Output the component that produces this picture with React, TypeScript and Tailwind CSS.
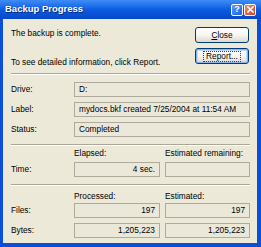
import React from 'react';

function Field({ value, right, className = '' }: { value?: string; right?: boolean; className?: string }) {
  return (
    <div
      className={`h-[15px] border border-[#aeab9e] bg-[#ebe8d9] px-[4px] leading-[13px] ${right ? 'text-right' : ''} ${className}`}
    >
      {value}
    </div>
  );
}

function Separator({ className = '' }: { className?: string }) {
  return (
    <div className={`border-t border-[#aca899] border-b border-b-white ${className}`} />
  );
}

function XpButton({ children, focused }: { children: React.ReactNode; focused?: boolean }) {
  return (
    <div
      className={`h-[16px] w-[54px] rounded-[3px] border border-[#003c74] bg-gradient-to-b from-white via-[#f7f6f1] to-[#dcd9cd] flex items-center justify-center ${
        focused ? 'shadow-[inset_0_0_0_1px_#8eb4ee,inset_0_0_0_2px_#c4d9f7]' : ''
      }`}
    >
      <span className={focused ? 'outline outline-1 outline-dotted outline-[#444] px-[2px] leading-[9px]' : ''}>
        {children}
      </span>
    </div>
  );
}

export default function App() {
  return (
    <div className="w-[261px] h-[247px] bg-[#0a4fd6] flex flex-col font-['Liberation_Sans',Arial,sans-serif] text-[8.3px] text-black overflow-hidden">
      {/* Title bar */}
      <div className="h-[19px] shrink-0 bg-gradient-to-b from-[#3f8cf6] via-[#0b5ce2] to-[#0847c8] flex items-center pl-[5px] pr-[5px]">
        <div className="flex-1 text-white font-bold text-[9.5px] [text-shadow:1px_1px_0_#0a2a80]">
          Backup Progress
        </div>
        <div className="flex items-center gap-[1px]">
          <div className="h-[12px] w-[12px] rounded-[2px] border border-white bg-gradient-to-br from-[#5c9cff] to-[#1a5fe0] flex items-center justify-center text-white font-bold text-[9px] leading-none">
            ?
          </div>
          <div className="h-[12px] w-[12px] rounded-[2px] border border-white bg-gradient-to-br from-[#f08c6a] to-[#d2401c] flex items-center justify-center">
            <svg width="7" height="7" viewBox="0 0 7 7">
              <path d="M1 1 L6 6 M6 1 L1 6" stroke="white" strokeWidth="1.6" strokeLinecap="square" />
            </svg>
          </div>
        </div>
      </div>

      {/* Body */}
      <div className="flex-1 ml-[3px] mr-[4px] mb-[4px] bg-[#ece9d8] pl-[8px] pr-[7px] flex flex-col">
        <div className="flex h-[50px]">
          <div className="flex-1">
            <div className="mt-[7px] h-[14px] leading-[14px]">The backup is complete.</div>
            <div className="mt-[15px] h-[14px] leading-[14px]">To see detailed information, click Report.</div>
          </div>
          <div className="mr-[1px] mt-[8px] flex flex-col gap-[5px]">
            <XpButton>
              <span className="underline">C</span>lose
            </XpButton>
            <XpButton focused>Report...</XpButton>
          </div>
        </div>

        <Separator className="mt-[4px]" />

        <div className="mt-[7px] grid grid-cols-[63px_1fr] gap-y-[5px] items-center">
          <div>Drive:</div>
          <Field value="D:" />
          <div>Label:</div>
          <Field value="mydocs.bkf created 7/25/2004 at 11:54 AM" />
          <div>Status:</div>
          <Field value="Completed" />
        </div>

        <Separator className="mt-[7px]" />

        <div className="mt-[2px] grid grid-cols-[58px_86px_85px] gap-x-[5px] items-center">
          <div className="col-start-2 h-[10px] leading-[10px]">Elapsed:</div>
          <div className="h-[10px] leading-[10px]">Estimated remaining:</div>
          <div className="mt-[4px]">Time:</div>
          <Field value="4 sec." right className="mt-[4px]" />
          <Field className="mt-[4px]" />
        </div>

        <Separator className="mt-[7px]" />

        <div className="mt-[5px] grid grid-cols-[58px_86px_85px] gap-x-[5px] items-center">
          <div className="col-start-2 h-[10px] leading-[10px]">Processed:</div>
          <div className="h-[10px] leading-[10px]">Estimated:</div>
          <div className="mt-[2px]">Files:</div>
          <Field value="197" right className="mt-[2px]" />
          <Field value="197" right className="mt-[2px]" />
          <div className="mt-[5px]">Bytes:</div>
          <Field value="1,205,223" right className="mt-[5px]" />
          <Field value="1,205,223" right className="mt-[5px]" />
        </div>
      </div>
    </div>
  );
}
